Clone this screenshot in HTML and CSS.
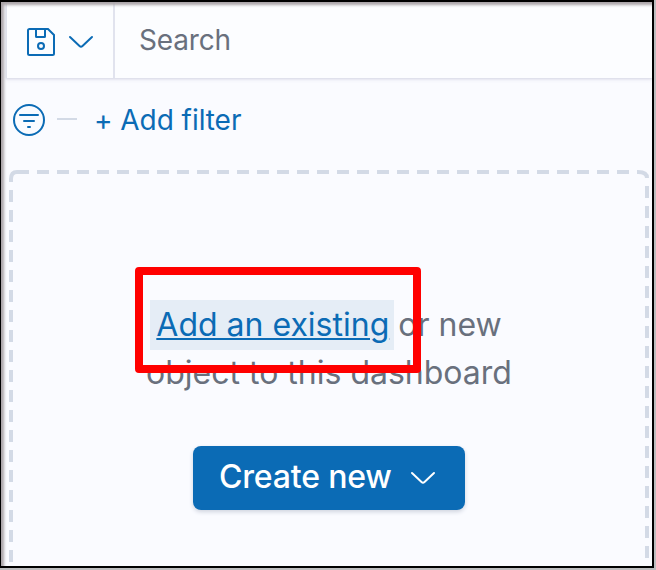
FILE: index.html
```
<!DOCTYPE html>
<html lang="en">
<head>
<meta charset="utf-8">
<title>Dashboard</title>
<link rel="stylesheet" href="styles.css">
</head>
<body>
<main class="frame">
  <header class="query-bar">
    <button class="saved-query" aria-label="Saved queries">
      <svg class="icon-save" width="30" height="30" viewBox="0 0 30 30"><path d="M3 2H22L28 8V26.500Q28 28 26.500 28H3.500Q2 28 2 26.500V3.500Q2 2 3.500 2ZM10 2V9.500Q10 10 10.500 10H18.500Q19 10 19 9.500V2"/><circle cx="15" cy="19" r="3"/></svg>
      <svg class="icon-chevron" width="26" height="14" viewBox="0 0 26 14"><path d="M2 2L11.500 11Q13 12.200 14.500 11L24 2"/></svg>
    </button>
    <div class="search">Search</div>
  </header>
  <nav class="filters">
    <svg class="icon-filter" width="32" height="32" viewBox="0 0 32 32"><circle cx="16" cy="16" r="15"/><path d="M7 11H25M11 17H21M15 23H17"/></svg>
    <span class="rule"></span>
    <a class="add-filter">+ Add filter</a>
  </nav>
  <section class="drop-zone">
    <svg class="outline" width="640" height="396" viewBox="0 0 640 396">
      <path d="M2 12V9Q2 2 8 2" />
      <path class="dashes" d="M8 2H629"/>
      <path d="M629 2Q638 2 638 8"/>
      <path class="dashes" d="M638 16V396"/>
      <path class="dashes" d="M2 20V396"/>
    </svg>
    <p class="message"><span class="line first"><a class="existing">Add an existing</a> or new</span><span class="line">object to this dashboard</span></p>
    <button class="create">Create new
      <svg class="icon-chevron" width="26" height="14" viewBox="0 0 26 14"><path d="M2 2L11.500 11Q13 12.200 14.500 11L24 2"/></svg>
    </button>
    <div class="highlight"></div>
  </section>
</main>
</body>
</html>
```
FILE: styles.css
```
* { box-sizing: border-box; }
body {
  margin: 0;
  width: 656px;
  height: 570px;
  overflow: hidden;
  background: #bdbdbf;
  font-family: Inter, sans-serif;
  color: #69707d;
}
.frame {
  position: relative;
  width: 654px;
  height: 568px;
  overflow: hidden;
  border: 2px solid #000;
  border-left-width: 1px;
  background: #fafbff;
  padding-left: 5px;
}
.frame::after {
  content: "";
  position: absolute;
  inset: 0 -8px -8px 0;
  box-shadow: inset 3px 3px 3px #aaa4a8;
  clip-path: inset(0 8px 8px 0);
  pointer-events: none;
}
svg { display: block; fill: none; stroke: currentColor; }
button { border: 0; font: inherit; }
.query-bar {
  display: flex;
  height: 76px;
  background: #fcfdff;
  border-left: 1px solid #e1e3ee;
  box-shadow: 0 1px 2px #d9dae7, 0 2px 4px #ececf5;
}
.saved-query {
  display: flex;
  align-items: center;
  gap: 12px;
  width: 108px;
  padding: 4px 0 0 19px;
  background: transparent;
  border-right: 2px solid #e1e3ee;
  color: #0b6bb5;
}
.icon-save, .icon-chevron, .icon-filter { stroke-width: 2; stroke-linecap: round; flex: none; }
.search { padding: 20px 0 0 24px; font-size: 28px; line-height: 36px; letter-spacing: -0.15px; }
.filters {
  display: flex;
  align-items: center;
  height: 84px;
  padding-left: 7px;
  color: #0b6bb5;
}
.rule { width: 20px; height: 2px; margin: 0 17px 2px 12px; background: #d3dae6; }
.add-filter { font-size: 28px; line-height: 36px; letter-spacing: -0.05px; }
.drop-zone {
  position: relative;
  display: flex;
  flex-direction: column;
  align-items: center;
  width: 640px;
  height: 396px;
  margin: 8px 0 0 3px;
}
.outline { position: absolute; inset: 0; color: #d3dae6; stroke-width: 4; }
.dashes { stroke-dasharray: 12 8; }
.message { margin: 131px 0 49px; font-size: 32px; line-height: 48px; text-align: center; }
.line { display: block; white-space: nowrap; }
.first { margin-left: -6px; }
.existing {
  display: inline-block;
  height: 50px;
  margin: -1px -5px -1px 0;
  padding: 1px 5px 0 6px;
  background: #e5edf6;
  color: #0b6bb5;
  text-decoration: underline;
  text-decoration-thickness: 2px;
  text-underline-offset: 2px;
}
.create {
  display: flex;
  align-items: center;
  gap: 18px;
  width: 272px;
  height: 64px;
  padding: 0 0 3px 26px;
  border-radius: 8px;
  background: #0b6bb5;
  color: #fff;
  font-size: 32px;
  font-weight: 500;
  letter-spacing: -0.18px;
  box-shadow: 0 2px 4px #cfd4df;
}
.create .icon-chevron { margin-top: 3px; }
.highlight {
  position: absolute;
  left: 126px;
  top: 97px;
  width: 286px;
  height: 106px;
  border: 8px solid #f00;
  border-radius: 4px;
}
```
